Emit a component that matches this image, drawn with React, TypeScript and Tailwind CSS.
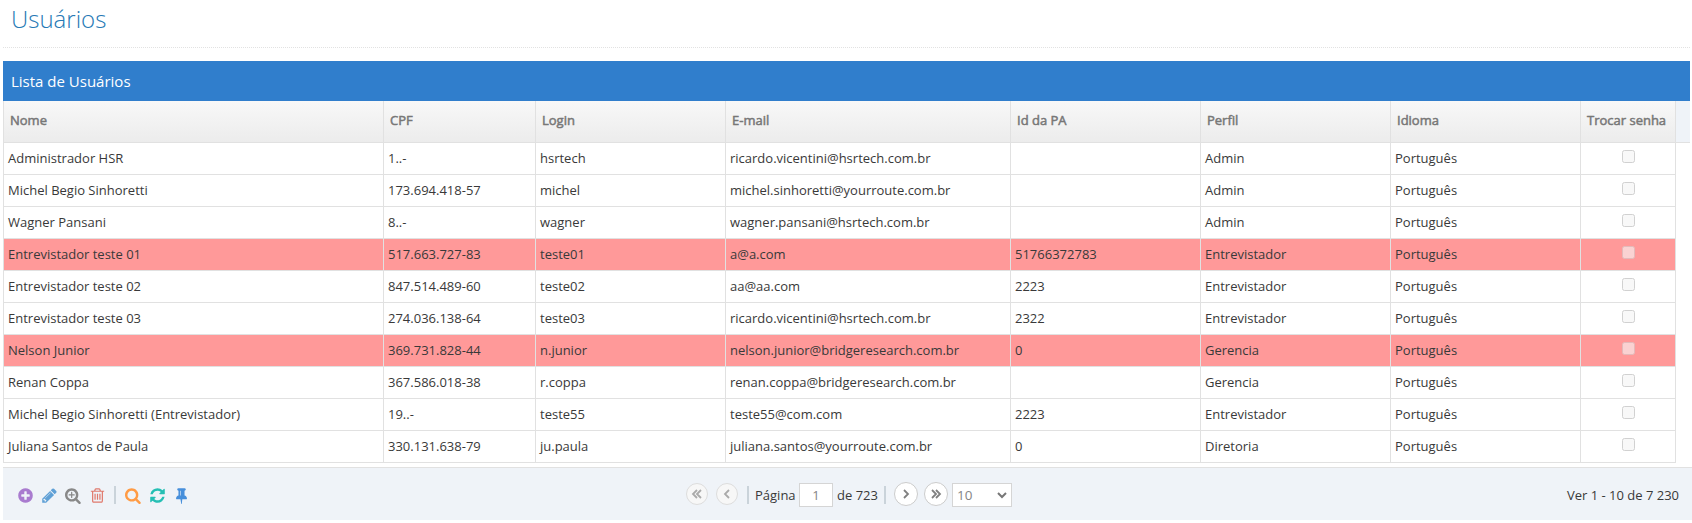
import React from "react";

type Row = {
  name: string;
  cpf: string;
  login: string;
  email: string;
  pa: string;
  role: string;
  blocked?: boolean;
};

const rows: Row[] = [
  { name: "Administrador HSR", cpf: "1..-", login: "hsrtech", email: "ricardo.vicentini@hsrtech.com.br", pa: "", role: "Admin" },
  { name: "Michel Begio Sinhoretti", cpf: "173.694.418-57", login: "michel", email: "michel.sinhoretti@yourroute.com.br", pa: "", role: "Admin" },
  { name: "Wagner Pansani", cpf: "8..-", login: "wagner", email: "wagner.pansani@hsrtech.com.br", pa: "", role: "Admin" },
  { name: "Entrevistador teste 01", cpf: "517.663.727-83", login: "teste01", email: "a@a.com", pa: "51766372783", role: "Entrevistador", blocked: true },
  { name: "Entrevistador teste 02", cpf: "847.514.489-60", login: "teste02", email: "aa@aa.com", pa: "2223", role: "Entrevistador" },
  { name: "Entrevistador teste 03", cpf: "274.036.138-64", login: "teste03", email: "ricardo.vicentini@hsrtech.com.br", pa: "2322", role: "Entrevistador" },
  { name: "Nelson Junior", cpf: "369.731.828-44", login: "n.junior", email: "nelson.junior@bridgeresearch.com.br", pa: "0", role: "Gerencia", blocked: true },
  { name: "Renan Coppa", cpf: "367.586.018-38", login: "r.coppa", email: "renan.coppa@bridgeresearch.com.br", pa: "", role: "Gerencia" },
  { name: "Michel Begio Sinhoretti (Entrevistador)", cpf: "19..-", login: "teste55", email: "teste55@com.com", pa: "2223", role: "Entrevistador" },
  { name: "Juliana Santos de Paula", cpf: "330.131.638-79", login: "ju.paula", email: "juliana.santos@yourroute.com.br", pa: "0", role: "Diretoria" },
];

const headers = ["Nome", "CPF", "Login", "E-mail", "Id da PA", "Perfil", "Idioma", "Trocar senha"];

const grid = "grid w-[1673px] grid-cols-[381px_152px_190px_285px_190px_190px_190px_95px]";

const ICONS = {
  plus: "M1344 960v-128q0-26-19-45t-45-19h-256v-256q0-26-19-45t-45-19h-128q-26 0-45 19t-19 45v256h-256q-26 0-45 19t-19 45v128q0 26 19 45t45 19h256v256q0 26 19 45t45 19h128q26 0 45-19t19-45v-256h256q26 0 45-19t19-45zm320-64q0 209-103 385.5t-279.5 279.5-385.5 103-385.5-103-279.5-279.5-103-385.5 103-385.5 279.5-279.5 385.5-103 385.5 103 279.5 279.5 103 385.5z",
  pencil: "M491 1536l91-91-235-235-91 91v107h128v128h107zm523-928q0-22-22-22-10 0-17 7l-542 542q-7 7-7 17 0 22 22 22 10 0 17-7l542-542q7-7 7-17zm-54-192l416 416-832 832h-416v-416zm683 96q0 53-37 90l-166 166-416-416 166-165q36-38 90-38 53 0 91 38l235 234q37 39 37 91z",
  zoom: "M1024 800v64q0 13-9.5 22.5t-22.5 9.5h-224v224q0 13-9.5 22.5t-22.5 9.5h-64q-13 0-22.5-9.5t-9.5-22.5v-224h-224q-13 0-22.5-9.5t-9.5-22.5v-64q0-13 9.5-22.5t22.5-9.5h224v-224q0-13 9.5-22.5t22.5-9.5h64q13 0 22.5 9.5t9.5 22.5v224h224q13 0 22.5 9.5t9.5 22.5zm128 32q0-185-131.5-316.5t-316.5-131.5-316.5 131.5-131.5 316.5 131.5 316.5 316.5 131.5 316.5-131.5 131.5-316.5zm512 832q0 53-37.5 90.5t-90.5 37.5q-54 0-90-38l-343-342q-179 124-399 124-143 0-273.5-55.5t-225-150-150-225-55.5-273.5 55.5-273.5 150-225 225-150 273.5-55.5 273.5 55.5 225 150 150 225 55.5 273.5q0 220-124 399l343 343q37 37 37 90z",
  trash: "M704 736v576q0 14-9 23t-23 9h-64q-14 0-23-9t-9-23v-576q0-14 9-23t23-9h64q14 0 23 9t9 23zm256 0v576q0 14-9 23t-23 9h-64q-14 0-23-9t-9-23v-576q0-14 9-23t23-9h64q14 0 23 9t9 23zm256 0v576q0 14-9 23t-23 9h-64q-14 0-23-9t-9-23v-576q0-14 9-23t23-9h64q14 0 23 9t9 23zm128 724v-948h-896v948q0 22 7 40.5t14.5 27 10.5 8.5h832q3 0 10.5-8.5t14.5-27 7-40.5zm-672-1076h448l-48-117q-7-9-17-11h-317q-10 2-17 11zm928 32v64q0 14-9 23t-23 9h-96v948q0 83-47 143.5t-113 60.5h-832q-66 0-113-58.5t-47-141.5v-952h-96q-14 0-23-9t-9-23v-64q0-14 9-23t23-9h309l70-167q15-37 54-63t79-26h320q40 0 79 26t54 63l70 167h309q14 0 23 9t9 23z",
  search: "M1152 832q0-185-131.5-316.5t-316.5-131.5-316.5 131.5-131.5 316.5 131.5 316.5 316.5 131.5 316.5-131.5 131.5-316.5zm512 832q0 52-38 90t-90 38q-54 0-90-38l-343-342q-179 124-399 124-143 0-273.5-55.5t-225-150-150-225-55.5-273.5 55.5-273.5 150-225 225-150 273.5-55.5 273.5 55.5 225 150 150 225 55.5 273.5q0 220-124 399l343 343q37 37 37 90z",
  refresh: "M1639 1056q0 5-1 7-64 268-268 434.5t-478 166.5q-146 0-282.5-55t-243.5-157l-129 129q-19 19-45 19t-45-19-19-45v-448q0-26 19-45t45-19h448q26 0 45 19t19 45-19 45l-137 137q71 66 161 102t187 36q134 0 250-65t186-179q11-17 53-117 8-23 30-23h192q13 0 22.5 9.5t9.5 22.5zm25-800v448q0 26-19 45t-45 19h-448q-26 0-45-19t-19-45 19-45l138-138q-148-137-349-137-134 0-250 65t-186 179q-11 17-53 117-8 23-30 23h-199q-13 0-22.5-9.5t-9.5-22.5v-7q65-268 270-434.5t480-166.5q146 0 284 55.5t245 156.5l130-129q19-19 45-19t45 19 19 45z",
  pin: "M800 864v-448q0-14-9-23t-23-9-23 9-9 23v448q0 14 9 23t23 9 23-9 9-23zm672 352q0 26-19 45t-45 19h-429l-51 483q-2 12-10.5 20.5t-20.5 8.5h-1q-27 0-32-27l-76-485h-404q-26 0-45-19t-19-45q0-123 78.5-221.5t177.5-98.5v-512q-52 0-90-38t-38-90 38-90 90-38h640q52 0 90 38t38 90-38 90-90 38v512q99 0 177.5 98.5t78.5 221.5z",
};

function ToolIcon({ name, className }: { name: keyof typeof ICONS; className: string }) {
  return (
    <button className="flex w-6 justify-center">
      <svg viewBox="0 0 1792 1792" fill="currentColor" className={`size-[17px] overflow-visible ${className}`}>
        <path d={ICONS[name]} />
      </svg>
    </button>
  );
}

function Chevron({ d }: { d: string }) {
  return (
    <svg viewBox="0 0 12 12" className="size-3" fill="none" stroke="currentColor" strokeWidth="1.8">
      <path d={d} />
    </svg>
  );
}

function Cell({ children, first }: { children?: React.ReactNode; first?: boolean }) {
  return (
    <div className={`h-full overflow-hidden whitespace-nowrap border-r border-[#e1e1e1] pl-1 leading-[31px] ${first ? "border-l" : ""}`}>
      {children}
    </div>
  );
}

export default function App() {
  return (
    <div className="h-[523px] overflow-hidden bg-white pl-[3px] font-['Open_Sans',sans-serif] text-[13px] text-[#393939]">
      <div className="flex h-12 w-[1687px] flex-col border-b border-dotted border-[#e2e2e2]">
        <h1 className="pl-2 text-[24px] leading-[37px] font-light text-[#2679b5]">Usuários</h1>
      </div>
      <div className="mt-[13px] h-10 w-[1687px] bg-[#307ecc] pl-2 text-[15px] leading-[41px] text-white">Lista de Usuários</div>
      <div className="w-[1687px] border-b border-[#e1e1e1] bg-[#eff3f8]">
        <div className={`${grid} h-[41px] bg-linear-to-b from-[#f8f8f8] to-[#ececec] text-[#777] [-webkit-text-stroke:0.5px_#777]`}>
          {headers.map((h, i) => (
            <div key={h} className={`overflow-hidden whitespace-nowrap border-r border-[#e1e1e1] pl-1.5 leading-[39px] ${i === 0 ? "border-l" : ""}`}>
              {h}
            </div>
          ))}
        </div>
      </div>
      {rows.map((r) => (
        <div key={r.name} className={`${grid} h-8 border-b border-[#e1e1e1] ${r.blocked ? "bg-[#ff9999]" : "bg-white"}`}>
          <Cell first>{r.name}</Cell>
          <Cell>{r.cpf}</Cell>
          <Cell>{r.login}</Cell>
          <Cell>{r.email}</Cell>
          <Cell>{r.pa}</Cell>
          <Cell>{r.role}</Cell>
          <Cell>Português</Cell>
          <div className="flex justify-center border-r border-[#e1e1e1] pt-[7px]">
            <span className={`size-[13px] rounded-[2.5px] border border-[#d1d1d1] bg-[#f8f8f8] ${r.blocked ? "opacity-60" : ""}`} />
          </div>
        </div>
      ))}
      <div className="mt-1 flex h-[53px] w-[1689px] items-start border-t border-[#e1e1e1] bg-[#eff3f8]">
        <div className="flex w-[679px] items-center pt-[18px] pl-[10px]">
          <ToolIcon name="plus" className="text-[#a97bcf]" />
          <ToolIcon name="pencil" className="text-[#5fa0d6]" />
          <ToolIcon name="zoom" className="text-[#888]" />
          <ToolIcon name="trash" className="text-[#e0796c]" />
          <span className="mx-[5px] h-[18px] w-0.5 bg-[#cad3da]" />
          <ToolIcon name="search" className="text-[#ff9b45]" />
          <ToolIcon name="refresh" className="text-[#25bfb4]" />
          <ToolIcon name="pin" className="text-[#478fdb]" />
        </div>
        <div className="flex items-start pt-[15px]">
          <button className="ml-1 flex size-[22px] items-center justify-center rounded-full border border-[#ddd] bg-[#f7f7f7] text-[#aaa]">
            <Chevron d="M6 2 2 6l4 4M10 2 6 6l4 4" />
          </button>
          <button className="ml-2 flex size-[22px] items-center justify-center rounded-full border border-[#ddd] bg-[#f7f7f7] text-[#aaa]">
            <Chevron d="M8 2 4 6l4 4" />
          </button>
          <span className="mt-[3px] ml-[9px] h-[18px] w-0.5 bg-[#cad3da]" />
          <span className="w-[50px] pl-1.5 leading-[25px] whitespace-nowrap">Página</span>
          <span className="h-[24px] w-[34px] border border-[#d5d5d5] bg-white text-center leading-[23px] text-[#858585]">1</span>
          <span className="w-[51px] pl-1 leading-[25px] whitespace-nowrap">de 723</span>
          <span className="mt-[3px] h-[18px] w-0.5 bg-[#cad3da]" />
          <button className="-mt-px ml-2 flex size-6 items-center justify-center rounded-full border border-[#ccc] bg-white text-[#808080]">
            <Chevron d="M4 2l4 4-4 4" />
          </button>
          <button className="-mt-px ml-1.5 flex size-6 items-center justify-center rounded-full border border-[#ccc] bg-white text-[#808080]">
            <Chevron d="M2 2l4 4-4 4M6 2l4 4-4 4" />
          </button>
          <div className="ml-1 flex h-[24px] w-[60px] items-center justify-between border border-[#d5d5d5] bg-white pr-1 pl-1 text-[13.5px] text-[#858585]">
            <span>10</span>
            <svg viewBox="0 0 10 10" className="size-2.5" fill="none" stroke="#777" strokeWidth="2">
              <path d="M1 3l4 4 4-4" />
            </svg>
          </div>
        </div>
        <div className="ml-auto pt-[15px] pr-[13px] leading-[25px]">Ver 1 - 10 de 7 230</div>
      </div>
    </div>
  );
}
